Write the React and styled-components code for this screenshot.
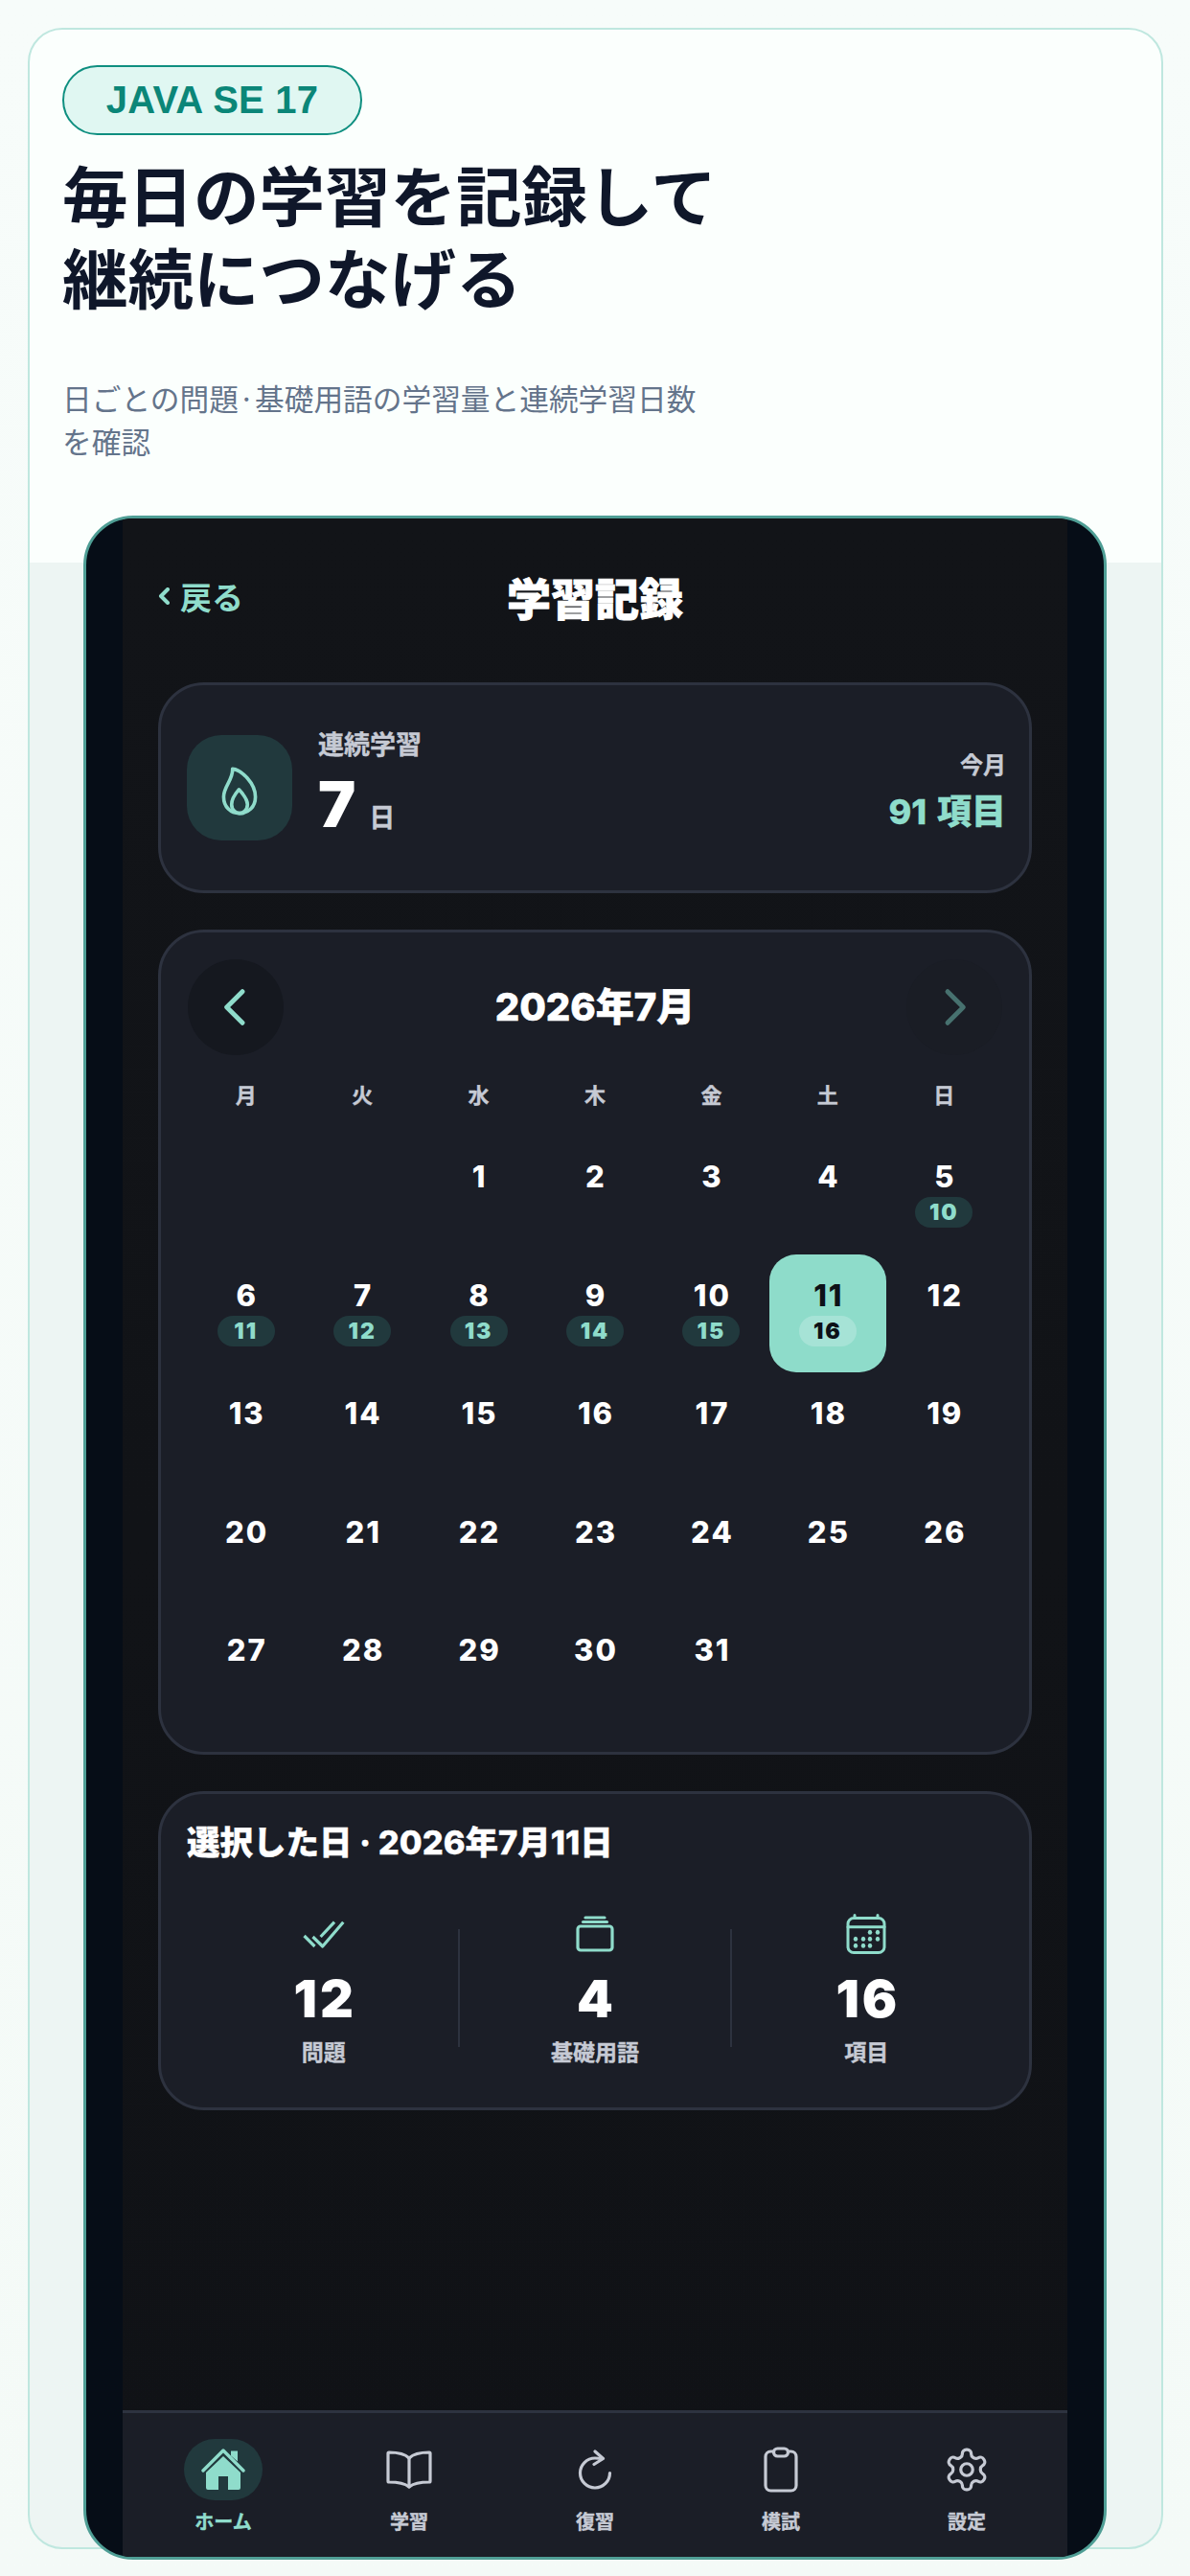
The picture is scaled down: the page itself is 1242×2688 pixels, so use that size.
import React from 'react';
import styled, { createGlobalStyle } from 'styled-components';

const Global = createGlobalStyle`
  html, body { margin: 0; padding: 0; }
  body {
    width: 1242px; height: 2688px; overflow: hidden;
    background: linear-gradient(180deg, #f7fcfa 0%, #f4faf7 100%);
    font-family: Inter, "Noto Sans CJK JP", sans-serif;
  }
`;
const Page = styled.div`
  box-sizing: border-box; width: 1242px; height: 2688px; padding: 29px;
`;
const Sheet = styled.main`
  box-sizing: border-box; width: 1185px; height: 2631px;
  border: 2px solid #bfe7df; border-radius: 36px;
  background: linear-gradient(180deg, #fbfffd 556px, #edf5f3 556px);
  padding: 37px 0 0 34px;
  display: flex; flex-direction: column;
`;
const Badge = styled.div`
  box-sizing: border-box; width: 313px; height: 73px;
  border: 2px solid #0f8f80; border-radius: 37px; background: #e0f7f2;
  color: #0b8678; font: 700 40px/69px "Liberation Sans", "Noto Sans CJK JP", sans-serif;
  letter-spacing: 0.2px; text-align: center;
`;
const Heading = styled.h1`
  margin: 18px 0 0; width: 760px;
  font: 700 68.5px/86px "Noto Sans CJK JP", sans-serif; color: #0f172a;
`;
const Sub = styled.p`
  margin: 61px 0 0; width: 670px;
  font: 400 30.7px/45px "Noto Sans CJK JP", sans-serif; color: #64748b;
`;
const Device = styled.section`
  box-sizing: border-box; width: 1068px; height: 2133px; margin: 56px 0 0 22px;
  border: 3px solid #4f9e95; border-radius: 52px; overflow: hidden;
  background: #060d17; padding: 0 38px;
  flex-shrink: 0;
`;
const Screen = styled.div`
  height: 100%; display: flex; flex-direction: column;
  background: linear-gradient(180deg, #121418 0%, #101216 100%);
`;
const TopBar = styled.header`
  height: 171px; padding: 0 39px; box-sizing: border-box; position: relative;
  display: flex; align-items: center; justify-content: center;
`;
const Back = styled.div`
  position: absolute; left: 37px; top: 58px;
  display: flex; align-items: center; gap: 11px; color: #8fdccb;
  font: 700 33px/46px "Noto Sans CJK JP", sans-serif;
`;
const Title = styled.h2`
  margin: 0; transform: translateY(-5px);
  font: 900 46px/60px "Noto Sans CJK JP", sans-serif; color: #fff;
  -webkit-text-stroke: 0.8px #fff;
`;
const Cards = styled.div`
  display: flex; flex-direction: column; gap: 38px; padding: 0 37px; flex: 1;
`;
const Card = styled.div`
  box-sizing: border-box; border: 3px solid #2d323f; border-radius: 48px; background: #1b1e27;
  padding: ${p => p.$pad};
  height: ${p => p.$h}px;
`;
const Streak = styled(Card)`
  display: flex; align-items: center; gap: 27px;
`;
const FlameBox = styled.div`
  width: 110px; height: 110px; border-radius: 36px; background: #21393d;
  display: flex; align-items: center; justify-content: center; flex-shrink: 0;
  padding-top: 6px; box-sizing: border-box;
`;
const StreakText = styled.div`
  display: flex; flex-direction: column; flex: 1; padding-bottom: 11px; gap: 5px;
`;
const Muted = styled.div`
  font: 700 ${p => p.$s || 27}px/${p => p.$lh || 36}px "Noto Sans CJK JP", sans-serif; color: #c6cad4;
  -webkit-text-stroke: 0.4px #c6cad4;
`;
const StreakValue = styled.div`
  display: flex; align-items: baseline; gap: 14px; margin-top: 3px;
`;
const BigNum = styled.span`
  font: 900 66px/74px Inter, sans-serif; color: #fff;
`;
const Right = styled.div`
  text-align: right; display: flex; flex-direction: column; gap: 12px; padding-top: 6px;
`;
const Accent = styled.div`
  font: 800 36px/44px Inter, "Noto Sans CJK JP", sans-serif; color: #8fdccb;
  word-spacing: 3px;
  -webkit-text-stroke: 0.4px #8fdccb;
`;
const CalHead = styled.div`
  display: flex; align-items: center; justify-content: space-between; height: 100px;
`;
const NavBtn = styled.div`
  width: 100px; height: 100px; border-radius: 50%;
  display: flex; align-items: center; justify-content: center;
  background: ${p => p.$dim ? '#1a1d25' : '#15181f'};
`;
const Month = styled.div`
  font: 800 40px/56px Inter, "Noto Sans CJK JP", sans-serif; color: #fff;
  -webkit-text-stroke: 0.6px #fff;
`;
const Week = styled.div`
  display: grid; grid-template-columns: repeat(7, 1fr); margin-top: 18px; height: 44px;
  align-items: center;
`;
const WeekDay = styled.div`
  text-align: center; font: 700 22px/30px "Noto Sans CJK JP", sans-serif; color: #c6cad4;
  -webkit-text-stroke: 0.4px #c6cad4;
`;
const Days = styled.div`
  display: grid; grid-template-columns: repeat(7, 1fr); grid-auto-rows: 123.6px; margin-top: 22px;
`;
const Day = styled.div`
  border-radius: 28px; display: flex; flex-direction: column; align-items: center;
  padding-top: 24px; box-sizing: border-box;
  background: ${p => p.$sel ? '#8edcca' : 'transparent'};
`;
const DayNum = styled.div`
  font: 800 31px/38px Inter, sans-serif; letter-spacing: 2px; margin-right: -2px;
  color: ${p => p.$sel ? '#0d1117' : '#fff'};
`;
const Pill = styled.div`
  margin-top: 2px; height: 32px; min-width: 36px; padding: 0 12px; border-radius: 16px;
  font: 900 23px/32px Inter, sans-serif; letter-spacing: 2px; text-align: center;
  background: ${p => p.$sel ? '#a6e3d6' : '#21393d'};
  color: ${p => p.$sel ? '#0d1117' : '#8fdccb'};
`;
const CardTitle = styled.div`
  font: 800 34.5px/46px Inter, "Noto Sans CJK JP", sans-serif; color: #fff;
  margin-left: -1px;
  -webkit-text-stroke: 0.4px #fff;
`;
const Stats = styled.div`
  display: grid; grid-template-columns: repeat(3, 1fr); margin-top: 50px;
`;
const Stat = styled.div`
  display: flex; flex-direction: column; align-items: center; position: relative;
  &:not(:first-child)::before {
    content: ''; position: absolute; left: -1px; top: 17px; height: 123px; width: 2px; background: #2d323f;
  }
`;
const StatIcon = styled.div`
  height: 44px; display: flex; align-items: center; justify-content: center;
`;
const StatNum = styled.div`
  margin-top: 13px; font: 900 54px/66px Inter, sans-serif; letter-spacing: 3px; margin-right: -3px; color: #fff;
`;
const StatLabel = styled.div`
  margin-top: 4px; font: 700 23px/34px "Noto Sans CJK JP", sans-serif; color: #c6cad4;
  -webkit-text-stroke: 0.4px #c6cad4;
`;
const Tabs = styled.nav`
  box-sizing: border-box; height: 153px; border-top: 3px solid #2d323f; background: #1b1e27;
  display: grid; grid-template-columns: repeat(5, 1fr); padding: 0 8px;
`;
const Tab = styled.div`
  display: flex; flex-direction: column; align-items: center; padding-top: 27px; box-sizing: border-box;
  color: ${p => p.$on ? '#8fdccb' : '#c6cad4'};
`;
const TabIcon = styled.div`
  width: 82px; height: 64px; border-radius: 32px; display: flex; align-items: center; justify-content: center;
  background: ${p => p.$on ? '#21393d' : 'transparent'};
`;
const TabLabel = styled.div`
  margin-top: 7px; font: 700 20px/30px "Noto Sans CJK JP", sans-serif;
  -webkit-text-stroke: 0.4px currentColor;
`;

const I = ({ w = 44, h, sw = 2, c = 'currentColor', children, vb = '0 0 24 24', cap = 'round' }) => (
  <svg width={w} height={h || w} viewBox={vb} fill="none" stroke={c} strokeWidth={sw} strokeLinecap={cap} strokeLinejoin="round">{children}</svg>
);

const Flame = () => (
  <I w={40} h={53} vb="120 110 120 160" sw={11} c="#8fdccb">
    <path d="M158 120C185 122 230 165 230 208C230 240 208 260 180 260C152 260 130 240 130 208C130 175 160 155 158 120Z" />
    <path d="M178 185C192 200 205 215 205 232C205 250 190 260 180 260C170 260 155 250 155 232C155 215 165 200 178 185Z" />
  </I>
);

const ChecksIcon = () => (
  <I w={44} vb="14 11 44 44" sw={3.2} c="#8fdccb" cap="butt">
    <path d="M15.5 35L26.5 46" />
    <path d="M24.500 36L34.700 46L56.300 20.700" />
    <path d="M32.600 36L47 20.700" />
  </I>
);
const StackIcon = () => (
  <I w={40} h={38} vb="0 0 40 38" sw={3.2} c="#8fdccb">
    <rect x="2" y="11" width="36" height="25" rx="3" />
    <path d="M7.500 6.500H32.500" />
    <path d="M10 2H30" />
  </I>
);
const CalIcon = () => (
  <I w={42} vb="-1 -1 42 42" sw={3} c="#8fdccb">
    <rect x="1" y="3.500" width="38" height="36" rx="6" />
    <path d="M1 12.700H39" />
    <path d="M8 0.500V3M32 0.500V3" />
    {[[24, 18.3], [32, 18.3], [9, 25.3], [17, 25.3], [24, 25.3], [32, 25.3], [9, 32.3], [17, 32.3], [24, 32.3]].map(([x, y]) => (
      <ellipse key={`${x}-${y}`} cx={x} cy={y} rx="2.2" ry="2.5" fill="#8fdccb" stroke="none" />
    ))}
  </I>
);
const HomeIcon = () => (
  <svg width="46" height="44" viewBox="0 0 46 44" fill="#8fdccb">
    <path d="M31 2.500h7v11l-7-6z" />
    <path d="M23 8 5 25v16a2 2 0 0 0 2 2h11V29h10v14h11a2 2 0 0 0 2-2V25z" />
    <path d="M2 23 23 2l21 21" fill="none" stroke="#8fdccb" strokeWidth="3.400" strokeLinecap="round" strokeLinejoin="round" />
  </svg>
);
const BookIcon = () => (
  <I w={48} h={42} vb="0 0 48 42" sw={3.2}>
    <path d="M24 9C19 4 11 3 3 3C2 3 2 3 2 4V33C2 34 2 34 3 34C11 34 19 35 24 39C29 35 37 34 45 34C46 34 46 34 46 33V4C46 3 46 3 45 3C37 3 29 4 24 9Z" />
    <path d="M24 9V39" />
  </I>
);
const RedoIcon = () => (
  <I w={36} h={42} vb="0 0 36 42" sw={3.2}>
    <path d="M25 9.800C22 9 20 9 18 9A15.500 15.500 0 1 0 33.500 24.500" />
    <path d="M18 2L26.500 9.500L17 15.500" />
  </I>
);
const ClipIcon = () => (
  <I w={36} h={48} vb="0 0 36 48" sw={3.2}>
    <rect x="2" y="5" width="32" height="41" rx="5.500" />
    <rect x="10.500" y="2" width="15" height="8" rx="4" fill="#1b1e27" />
  </I>
);
const GearIcon = () => (
  <I w={50} vb="0 0 24 24" sw={1.55}>
    <path d="M12.220 2h-.44a2 2 0 0 0-2 2v.18a2 2 0 0 1-1 1.730l-.43.25a2 2 0 0 1-2 0l-.15-.08a2 2 0 0 0-2.730.73l-.22.38a2 2 0 0 0 .73 2.730l.15.1a2 2 0 0 1 1 1.720v.51a2 2 0 0 1-1 1.740l-.15.09a2 2 0 0 0-.73 2.730l.22.38a2 2 0 0 0 2.730.73l.15-.08a2 2 0 0 1 2 0l.43.25a2 2 0 0 1 1 1.730V20a2 2 0 0 0 2 2h.44a2 2 0 0 0 2-2v-.18a2 2 0 0 1 1-1.730l.43-.25a2 2 0 0 1 2 0l.15.08a2 2 0 0 0 2.730-.73l.22-.39a2 2 0 0 0-.73-2.730l-.15-.08a2 2 0 0 1-1-1.740v-.5a2 2 0 0 1 1-1.740l.15-.09a2 2 0 0 0 .73-2.730l-.22-.38a2 2 0 0 0-2.730-.73l-.15.08a2 2 0 0 1-2 0l-.43-.25a2 2 0 0 1-1-1.730V4a2 2 0 0 0-2-2z" />
    <circle cx="12" cy="12" r="3" />
  </I>
);

const row = [
  [null, null, 1, 2, 3, 4, [5, 10]],
  [[6, 11], [7, 12], [8, 13], [9, 14], [10, 15], [11, 16], 12],
  [13, 14, 15, 16, 17, 18, 19],
  [20, 21, 22, 23, 24, 25, 26],
  [27, 28, 29, 30, 31, null, null],
].flat();

const tabs = [
  ['ホーム', <HomeIcon key="h" />],
  ['学習', <BookIcon key="b" />],
  ['復習', <RedoIcon key="r" />],
  ['模試', <ClipIcon key="c" />],
  ['設定', <GearIcon key="s" />],
];

export default function App() {
  return (
    <Page>
      <Global />
      <Sheet>
        <Badge>JAVA SE 17</Badge>
        <Heading>毎日の学習を記録して<br />継続につなげる</Heading>
        <Sub>日ごとの問題·基礎用語の学習量と連続学習日数を確認</Sub>
        <Device>
          <Screen>
            <TopBar>
              <Back><I w={12} h={18} vb="0 0 12 18" sw={4} c="#8fdccb"><path d="M10 2L3 9L10 16" /></I>戻る</Back>
              <Title>学習記録</Title>
            </TopBar>
            <Cards>
              <Streak $h={220} $pad="0 24px 0 27px">
                <FlameBox><Flame /></FlameBox>
                <StreakText>
                  <Muted>連続学習</Muted>
                  <StreakValue><BigNum>7</BigNum><Muted>日</Muted></StreakValue>
                </StreakText>
                <Right>
                  <Muted $s={24} $lh={32}>今月</Muted>
                  <Accent>91 項目</Accent>
                </Right>
              </Streak>
              <Card $h={861} $pad="28px">
                <CalHead>
                  <NavBtn><I w={56} sw={2.1} c="#8fdccb"><path d="M15 5l-7 7 7 7" /></I></NavBtn>
                  <Month>2026年7月</Month>
                  <NavBtn $dim><I w={56} sw={2.1} c="#47716f"><path d="M9 5l7 7-7 7" /></I></NavBtn>
                </CalHead>
                <Week>{['月', '火', '水', '木', '金', '土', '日'].map(d => <WeekDay key={d}>{d}</WeekDay>)}</Week>
                <Days>
                  {row.map((d, i) => {
                    if (d === null) return <Day key={i} />;
                    const [n, b] = Array.isArray(d) ? d : [d];
                    const sel = n === 11;
                    return (
                      <Day key={i} $sel={sel}>
                        <DayNum $sel={sel}>{n}</DayNum>
                        {b && <Pill $sel={sel}>{b}</Pill>}
                      </Day>
                    );
                  })}
                </Days>
              </Card>
              <Card $h={333} $pad="28px">
                <CardTitle>選択した日 · 2026年7月11日</CardTitle>
                <Stats>
                  <Stat>
                    <StatIcon><ChecksIcon /></StatIcon>
                    <StatNum>12</StatNum>
                    <StatLabel>問題</StatLabel>
                  </Stat>
                  <Stat>
                    <StatIcon><StackIcon /></StatIcon>
                    <StatNum>4</StatNum>
                    <StatLabel>基礎用語</StatLabel>
                  </Stat>
                  <Stat>
                    <StatIcon><CalIcon /></StatIcon>
                    <StatNum>16</StatNum>
                    <StatLabel>項目</StatLabel>
                  </Stat>
                </Stats>
              </Card>
            </Cards>
            <Tabs>
              {tabs.map(([label, icon], i) => (
                <Tab key={label} $on={i === 0}>
                  <TabIcon $on={i === 0}>{icon}</TabIcon>
                  <TabLabel>{label}</TabLabel>
                </Tab>
              ))}
            </Tabs>
          </Screen>
        </Device>
      </Sheet>
    </Page>
  );
}
